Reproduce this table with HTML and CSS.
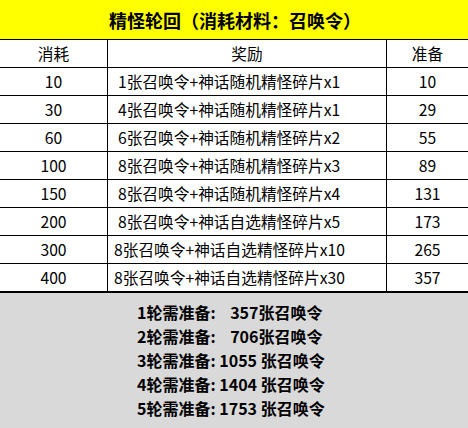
FILE: index.html
```html
<!DOCTYPE html>
<html lang="zh">
<head>
<meta charset="utf-8">
<link rel="stylesheet" href="styles.css">
</head>
<body>
<div class="sheet">
  <div class="title">精怪轮回（消耗材料：召唤令）</div>
  <div class="grid">
    <div class="row head"><div class="c c1">消耗</div><div class="c c2 center">奖励</div><div class="c c3">准备</div></div>
    <div class="row"><div class="c c1">10</div><div class="c c2">1张召唤令+神话随机精怪碎片x1</div><div class="c c3">10</div></div>
    <div class="row"><div class="c c1">30</div><div class="c c2">4张召唤令+神话随机精怪碎片x1</div><div class="c c3">29</div></div>
    <div class="row"><div class="c c1">60</div><div class="c c2">6张召唤令+神话随机精怪碎片x2</div><div class="c c3">55</div></div>
    <div class="row"><div class="c c1">100</div><div class="c c2">8张召唤令+神话随机精怪碎片x3</div><div class="c c3">89</div></div>
    <div class="row"><div class="c c1">150</div><div class="c c2">8张召唤令+神话随机精怪碎片x4</div><div class="c c3">131</div></div>
    <div class="row"><div class="c c1">200</div><div class="c c2">8张召唤令+神话自选精怪碎片x5</div><div class="c c3">173</div></div>
    <div class="row"><div class="c c1">300</div><div class="c c2 wide">8张召唤令+神话自选精怪碎片x10</div><div class="c c3">265</div></div>
    <div class="row last"><div class="c c1">400</div><div class="c c2 wide">8张召唤令+神话自选精怪碎片x30</div><div class="c c3">357</div></div>
  </div>
  <div class="summary">
    <div class="line">1轮需准备:    357张召唤令</div>
    <div class="line">2轮需准备:    706张召唤令</div>
    <div class="line">3轮需准备: 1055 张召唤令</div>
    <div class="line">4轮需准备: 1404 张召唤令</div>
    <div class="line">5轮需准备: 1753 张召唤令</div>
  </div>
</div>
</body>
</html>
```

FILE: styles.css
```css
html, body {
  margin: 0;
  padding: 0;
  background: #d9d9d9;
}
body {
  width: 468px;
  height: 428px;
  overflow: hidden;
  font-family: "Noto Sans CJK SC", "Noto Sans", sans-serif;
  color: #000;
}
.sheet {
  display: flex;
  flex-direction: column;
  height: 428px;
}
.title {
  height: 39px;
  border-bottom: 1px solid #000;
  background: #ffff00;
  font-size: 18px;
  font-weight: bold;
  display: flex;
  align-items: center;
  justify-content: center;
  padding-left: 2px;
}
.grid {
  background: #fff;
  display: flex;
  flex-direction: column;
}
.row {
  display: grid;
  grid-template-columns: 108px 279px 81px;
  height: 27px;
  border-bottom: 1px solid #000;
  font-size: 15.7px;
}
.row.last {
  border-bottom: 2px solid #000;
}
.c {
  display: flex;
  align-items: center;
  justify-content: center;
  white-space: nowrap;
  line-height: 1;
  padding-top: 1px;
}
.c1, .c2 {
  border-right: 1px solid #000;
}
.c2 {
  justify-content: flex-start;
  padding-left: 10px;
}
.c2.wide {
  padding-left: 6px;
}
.c2.center {
  justify-content: center;
  padding-left: 0;
}
.summary {
  flex: 1;
  background: #d9d9d9;
  padding-top: 7px;
  display: flex;
  flex-direction: column;
  align-items: center;
}
.line {
  white-space: pre;
  font-weight: bold;
  font-size: 16px;
  line-height: 24px;
  width: 196px;
  text-align: left;
  padding-left: 2px;
}
```
